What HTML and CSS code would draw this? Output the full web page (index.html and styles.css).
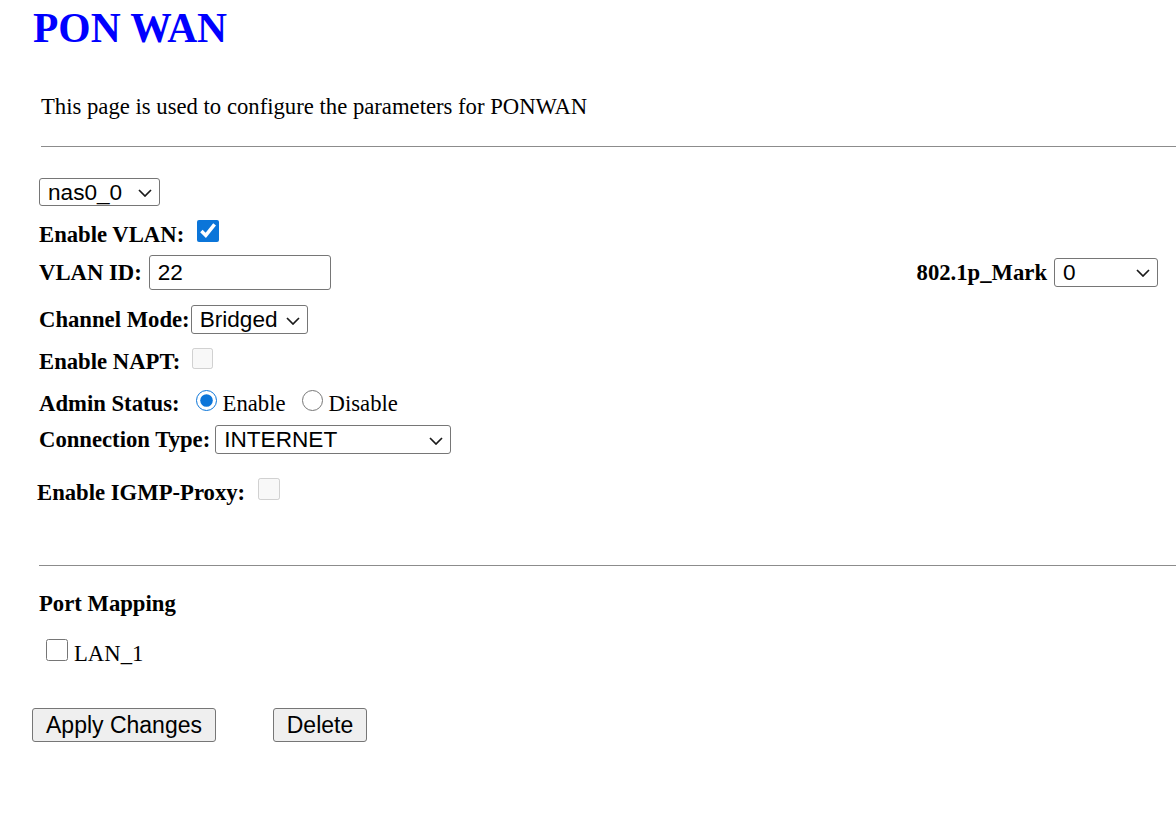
FILE: index.html
```html
<!DOCTYPE html>
<html lang="en">
<head>
    <meta charset="UTF-8">
    <title>PON WAN</title>
    <link rel="stylesheet" href="styles.css">
</head>
<body>
    <h1 class="title">PON WAN</h1>
    <p class="intro">This page is used to configure the parameters for PONWAN</p>
    <hr class="rule">

    <form class="wan-form" id="wan-form">
        <div class="row row-if">
            <span class="pick">
                <select class="ctl sel sel-if" name="ifname">
                    <option>nas0_0</option>
                </select>
                <svg class="chev" width="14" height="8" viewBox="0 0 14 8"><path d="M1 1 L7 7 L13 1"/></svg>
            </span>
        </div>
        <div class="row row-vlan">
            <b>Enable VLAN:</b>
            <input type="checkbox" class="chk chk-vlan" name="vlan" checked>
        </div>
        <div class="row row-split row-vid">
            <span class="group">
                <b>VLAN ID:</b>
                <input type="text" class="ctl txt-vid" name="vid" value="22">
            </span>
            <span class="group">
                <b>802.1p_Mark</b>
                <span class="pick pick-mark">
                    <select class="ctl sel sel-mark" name="vprio">
                        <option>0</option>
                    </select>
                    <svg class="chev" width="14" height="8" viewBox="0 0 14 8"><path d="M1 1 L7 7 L13 1"/></svg>
                </span>
            </span>
        </div>
        <div class="row row-mode">
            <b>Channel Mode:</b>
            <span class="pick pick-mode">
                <select class="ctl sel sel-mode" name="adslConnectionMode">
                    <option>Bridged</option>
                </select>
                <svg class="chev" width="14" height="8" viewBox="0 0 14 8"><path d="M1 1 L7 7 L13 1"/></svg>
            </span>
        </div>
        <div class="row row-napt">
            <b>Enable NAPT:</b>
            <input type="checkbox" class="chk chk-napt" name="naptEnabled" disabled>
        </div>
        <div class="row row-admin">
            <b>Admin Status:</b>
            <input type="radio" class="rad rad-on" name="chEnable" checked>
            <span class="rad-label">Enable</span>
            <input type="radio" class="rad rad-off" name="chEnable">
            <span class="rad-label">Disable</span>
        </div>
        <div class="row row-ctype">
            <b>Connection Type:</b>
            <span class="pick pick-ctype">
                <select class="ctl sel sel-ctype" name="ctype">
                    <option>INTERNET</option>
                </select>
                <svg class="chev" width="14" height="8" viewBox="0 0 14 8"><path d="M1 1 L7 7 L13 1"/></svg>
            </span>
        </div>
        <div class="row row-igmp">
            <b>Enable IGMP-Proxy:</b>
            <input type="checkbox" class="chk chk-igmp" name="igmpEnabled" disabled>
        </div>

        <hr class="rule rule-ports">

        <div class="section-title">Port Mapping</div>
        <div class="row row-lan">
            <input type="checkbox" class="chk chk-lan" name="chkpt0">
            <span class="lan-label">LAN_1</span>
        </div>

        <div class="actions">
            <button type="submit" class="btn btn-apply">Apply Changes</button>
            <button type="button" class="btn btn-delete">Delete</button>
        </div>
    </form>
</body>
</html>
```

FILE: styles.css
```css
body {
    margin: 0;
    font-family: "Liberation Serif", "Times New Roman", serif;
    font-size: 22.7px;
    color: #000;
    background-color: #fff;
}

.title {
    margin: 5px 0 0 33px;
    font-size: 41.5px;
    line-height: 47px;
    color: #0000ff;
}

.intro {
    margin: 42px 0 0 41px;
    line-height: 26px;
}

.rule {
    margin: 26px 0 0 41px;
    height: 0;
    border: 0;
    border-top: 1px solid #8c8c8c;
}

.wan-form {
    padding-left: 39px;
}

.row {
    display: flex;
    align-items: baseline;
    line-height: 26px;
    white-space: nowrap;
}

.row-split {
    justify-content: space-between;
    padding-right: 18px;
}

.group {
    display: flex;
    align-items: baseline;
}

.row-if { margin-top: 31px; }
.row-vlan { margin-top: 14px; }
.row-vid { margin-top: 7px; }
.row-mode { margin-top: 15px; }
.row-napt { margin-top: 14px; }
.row-admin { margin-top: 15px; }
.row-ctype { margin-top: 8px; }
.row-igmp { margin-top: 24px; margin-left: -2px; }

/* form controls */
.ctl {
    box-sizing: border-box;
    font-family: "Liberation Sans", Arial, sans-serif;
    font-size: 22.6px;
    color: #000;
    margin: 0;
}

.pick {
    position: relative;
    display: inline-flex;
}

.sel {
    appearance: none;
    padding: 0 28px 0 8px;
    background-color: #fff;
    border: 1px solid #767676;
    border-radius: 3px;
}

.chev {
    position: absolute;
    right: 8px;
    top: 50%;
    margin-top: -3px;
    pointer-events: none;
}

.chev path {
    fill: none;
    stroke: #1a1a1a;
    stroke-width: 1.7;
}

.sel-if { width: 121px; height: 28px; }
.txt-vid {
    width: 182px;
    height: 35px;
    margin-left: 7px;
    padding: 1px 8px;
    border: 1px solid #767676;
    border-radius: 3px;
}
.pick-mark { margin-left: 7px; }
.sel-mark { width: 104px; height: 29px; }
.pick-mode { margin-left: 1px; }
.sel-mode { width: 117px; height: 29px; }
.pick-ctype { margin-left: 5px; }
.sel-ctype { width: 236px; height: 29px; }

.chk, .rad {
    width: 22px;
    height: 22px;
    margin: 0 0 1px 0;
    accent-color: #0b75d9;
}

.rad { width: 21px; height: 21px; margin-bottom: 0; }

.chk-vlan { margin-left: 13px; }
.chk-napt { margin-left: 12px; width: 21px; height: 21px; margin-bottom: 2px; }
.chk-igmp { margin-left: 13px; }

.rad-on { margin-left: 16px; }
.rad-off { margin-left: 16px; }
.rad-label { margin-left: 6px; }

.rule-ports {
    margin: 59px 0 0 0;
}

.section-title {
    margin-top: 25px;
    font-weight: bold;
    line-height: 26px;
}

.row-lan { margin-top: 22px; }
.chk-lan { margin-left: 7px; }
.lan-label { margin-left: 6px; }

.actions {
    display: flex;
    gap: 57px;
    margin: 41px 0 0 -7px;
}

.btn {
    box-sizing: border-box;
    height: 34px;
    margin: 0;
    padding: 0;
    font-family: "Liberation Sans", Arial, sans-serif;
    font-size: 23px;
    color: #000;
    background-color: #efefef;
    border: 1px solid #767676;
    border-radius: 3px;
}

.btn-apply { width: 184px; }
.btn-delete { width: 94px; }
```
